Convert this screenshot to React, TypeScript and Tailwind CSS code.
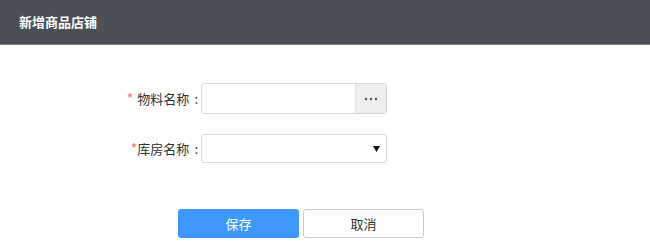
export default function App() {
  return (
    <div className="w-[650px] h-[245px] bg-white font-['Microsoft_YaHei','Noto_Sans_CJK_SC',sans-serif] text-[#333]">
      <div className="h-[45px] bg-[#4a4f58] border-b-[1px] border-[#7a7f86] flex items-center pl-[19px]">
        <h1 className="text-white text-[13px] font-bold">新增商品店铺</h1>
      </div>

      <div className="pt-[38px] pl-[110px]">
        <div className="flex items-center">
          <label className="w-[91px] flex justify-end items-center text-[13px] whitespace-nowrap">
            <span className="text-[#f56c6c] text-[14px] mr-[4px]">*</span>
            <span>物料名称</span>
            <span className="ml-[5px] mr-[3px]">:</span>
          </label>
          <div className="flex w-[186px] h-[31px] border border-[#d9d9d9] rounded-[3px] overflow-hidden">
            <input className="flex-1 min-w-0 px-2 outline-none text-[13px]" />
            <button className="w-[31px] flex items-center justify-center bg-[#eeeeee] border-l border-[#e4e4e4]">
              <svg width="14" height="4" viewBox="0 0 14 4">
                <circle cx="2" cy="2" r="1.2" fill="#555" />
                <circle cx="7" cy="2" r="1.2" fill="#555" />
                <circle cx="12" cy="2" r="1.2" fill="#555" />
              </svg>
            </button>
          </div>
        </div>

        <div className="flex items-center mt-[20px]">
          <label className="w-[91px] flex justify-end items-center text-[13px] whitespace-nowrap">
            <span className="text-[#f56c6c] text-[14px]">*</span>
            <span>库房名称</span>
            <span className="ml-[5px] mr-[3px]">:</span>
          </label>
          <div className="relative w-[186px] h-[29px] border border-[#d9d9d9] rounded-[3px]">
            <select className="w-full h-full appearance-none bg-transparent px-2 outline-none text-[13px]">
              <option></option>
            </select>
            <svg className="absolute right-[6px] top-[11px] pointer-events-none" width="7" height="6" viewBox="0 0 7 6">
              <path d="M0 0H7L3.5 6Z" fill="#111" />
            </svg>
          </div>
        </div>
      </div>

      <div className="flex pl-[178px] gap-[4px] mt-[46px]">
        <button className="w-[121px] h-[29px] rounded-[3px] bg-[#3d99ff] text-white text-[13px]">保存</button>
        <button className="w-[121px] h-[29px] rounded-[3px] border border-[#cccccc] bg-white text-[#333] text-[13px]">取消</button>
      </div>
    </div>
  )
}
